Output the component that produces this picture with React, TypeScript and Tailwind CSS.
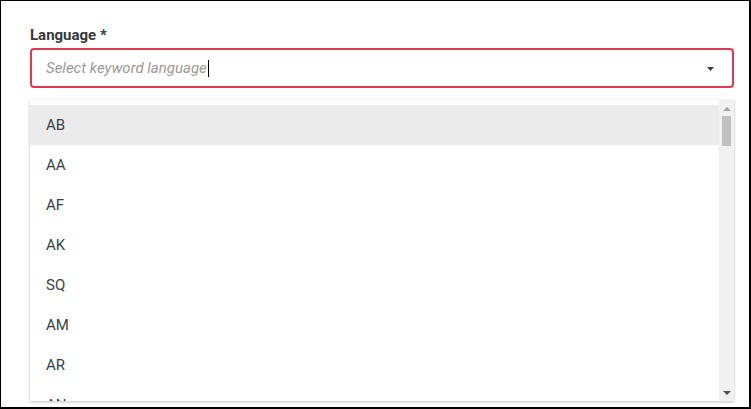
import { useState } from "react";

const languages = ["AB", "AA", "AF", "AK", "SQ", "AM", "AR", "AN", "HY", "AS"];

export default function App() {
  const [active, setActive] = useState("AB");

  return (
    <div
      className="h-[409px] w-[751px] overflow-hidden border-l border-t border-r-2 border-b-2 border-black bg-white px-[29px] pt-[24px]"
      style={{ fontFamily: "Roboto, 'Liberation Sans', sans-serif" }}
    >
      {/* Label */}
      <label className="block h-[20px] text-[15px] font-bold leading-[20px] text-[#343a40]">
        Language *
      </label>

      {/* Input */}
      <div className="mt-[3px] flex h-[40px] w-[704px] items-center rounded-[4px] border-2 border-[#e0394f] pl-[14px] pr-[18px]">
        <span className="text-[15px] italic text-[#9a9a9a]">Select keyword language</span>
        <span className="ml-px h-[17px] w-px bg-black" />
        <div className="flex-1" />
        <svg width="7" height="4" viewBox="0 0 7 4" className="mt-px">
          <path d="M0 0h7L3.5 4z" fill="#3a3f45" />
        </svg>
      </div>

      {/* Dropdown list */}
      <div className="mt-[12px] flex h-[301px] w-[704px] bg-white shadow-[0_1px_3px_rgba(0,0,0,0.25)]">
        <ul className="flex-1 overflow-hidden pt-[5px]">
          {languages.map((lang) => (
            <li
              key={lang}
              onMouseEnter={() => setActive(lang)}
              className={`flex h-[40px] items-center pl-[16px] text-[15px] text-[#3b4046] ${
                active === lang ? "bg-[#ebebeb]" : "bg-white"
              }`}
            >
              {lang}
            </li>
          ))}
        </ul>

        {/* Scrollbar */}
        <div className="flex w-[15px] flex-col items-center bg-[#f1f1f1]">
          <div className="flex h-[15px] items-center justify-center pt-[3px]">
            <svg width="8" height="4" viewBox="0 0 8 4">
              <path d="M0 4h8L4 0z" fill="#a3a3a3" />
            </svg>
          </div>
          <div className="mt-px h-[30px] w-[9px] bg-[#c1c1c1]" />
          <div className="flex-1" />
          <div className="flex h-[15px] items-center justify-center pb-[2px]">
            <svg width="8" height="4" viewBox="0 0 8 4">
              <path d="M0 0h8L4 4z" fill="#505050" />
            </svg>
          </div>
        </div>
      </div>
    </div>
  );
}
